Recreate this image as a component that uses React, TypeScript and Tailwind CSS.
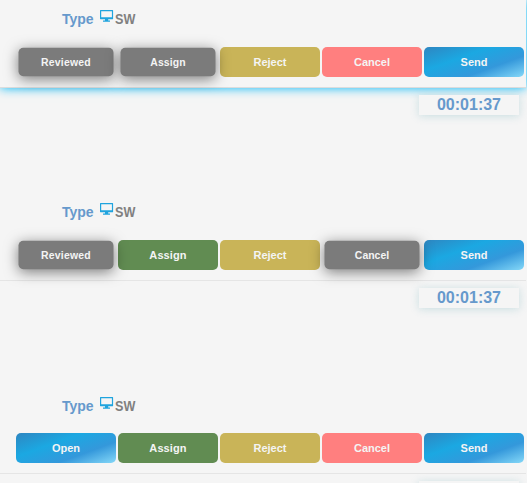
import React from "react";

type Tone = "gray" | "green" | "gold" | "red" | "blue";

const tones: Record<Tone, string> = {
  gray: "bg-[#7b7b7b] scale-95 shadow-[0_3px_15px_rgba(0,0,0,0.5)]",
  green: "bg-[#618c52]",
  gold: "bg-[#c9b458]",
  red: "bg-[#ff7f7f]",
  blue: "bg-[linear-gradient(160deg,#2e86c1_0%,#1ba8e2_36%,#3498db_68%,#85d8f8_100%)]",
};

function ActionButton({ label, tone }: { label: string; tone: Tone }) {
  const tracking = label === "Reviewed" ? "tracking-[0.2px]" : label === "Assign" ? "tracking-[0.1px]" : "";
  return (
    <button
      className={`h-[30px] w-[100px] shrink-0 rounded-[5px] text-[11px] font-bold leading-[30px] text-[#f4f4f4] ${tracking} ${tones[tone]}`}
    >
      {label}
    </button>
  );
}

function Monitor() {
  return (
    <svg className="mt-px h-[13px] w-[14px]" viewBox="0 0 14 13">
      <path fill="#1fa4de" fillRule="evenodd" d="M.4 0h12.300l.4.4v8.500l-.4.400H.4L0 8.900V.4ZM1.200 1.200v6h10.700v-6Z" />
      <path fill="#1fa4de" d="M5 9h3.200v1.500h1.800v1.300H3v-1.300h2Z" />
    </svg>
  );
}

function Clock() {
  return (
    <div className="h-5 w-[100px] bg-[#f5f5f5] text-center text-[16px] font-bold leading-[20px] text-[#6699cc] shadow-[0_1px_8px_rgba(95,170,180,0.3)]">
      00:01:37
    </div>
  );
}

interface CardProps {
  actions: [string, Tone][];
  frame: string;
  header: string;
  clock?: boolean;
}

function Card({ actions, frame, header, clock }: CardProps) {
  return (
    <section className={`relative w-[526px] shrink-0 border-b ${frame}`}>
      {clock && (
        <div className="flex justify-end pr-[7px]">
          <Clock />
        </div>
      )}
      <div className={`flex h-5 items-start pl-[62px] text-[14px] font-bold leading-[20px] ${header}`}>
        <span className="w-[38px] text-[#6699cc]">Type</span>
        <Monitor />
        <span className="ml-px inline-block origin-left scale-x-90 text-[#808080]">SW</span>
      </div>
      <div className="flex gap-[2px] pl-4">
        {actions.map(([label, tone]) => (
          <ActionButton key={label} label={label} tone={tone} />
        ))}
      </div>
    </section>
  );
}

export default function App() {
  return (
    <main className="flex h-[483px] w-[527px] flex-col overflow-hidden bg-[#f5f5f5] font-['Liberation_Sans',Arial,sans-serif]">
      <Card
        frame="z-0 h-[88px] border-b-[#dcdcdc] bg-[#f5f5f5] pt-[9px] shadow-[0_0_10px_#00b9f8]"
        header="mb-[18px]"
        actions={[["Reviewed", "gray"], ["Assign", "gray"], ["Reject", "gold"], ["Cancel", "red"], ["Send", "blue"]]}
      />
      <Card
        clock
        frame="z-10 h-[193px] border-b-[#e5e5e5] pt-[7px]"
        header="mt-[87px] mb-[18px]"
        actions={[["Reviewed", "gray"], ["Assign", "green"], ["Reject", "gold"], ["Cancel", "gray"], ["Send", "blue"]]}
      />
      <Card
        clock
        frame="z-10 h-[193px] border-b-[#e5e5e5] pt-[7px]"
        header="mt-[88px] mb-[17px]"
        actions={[["Open", "blue"], ["Assign", "green"], ["Reject", "gold"], ["Cancel", "red"], ["Send", "blue"]]}
      />
      <div className="flex w-[526px] shrink-0 justify-end pt-[7px] pr-[7px]">
        <div className="h-5 w-[100px] bg-[#f5f5f5] shadow-[0_1px_8px_rgba(95,170,180,0.3)]" />
      </div>
    </main>
  );
}
